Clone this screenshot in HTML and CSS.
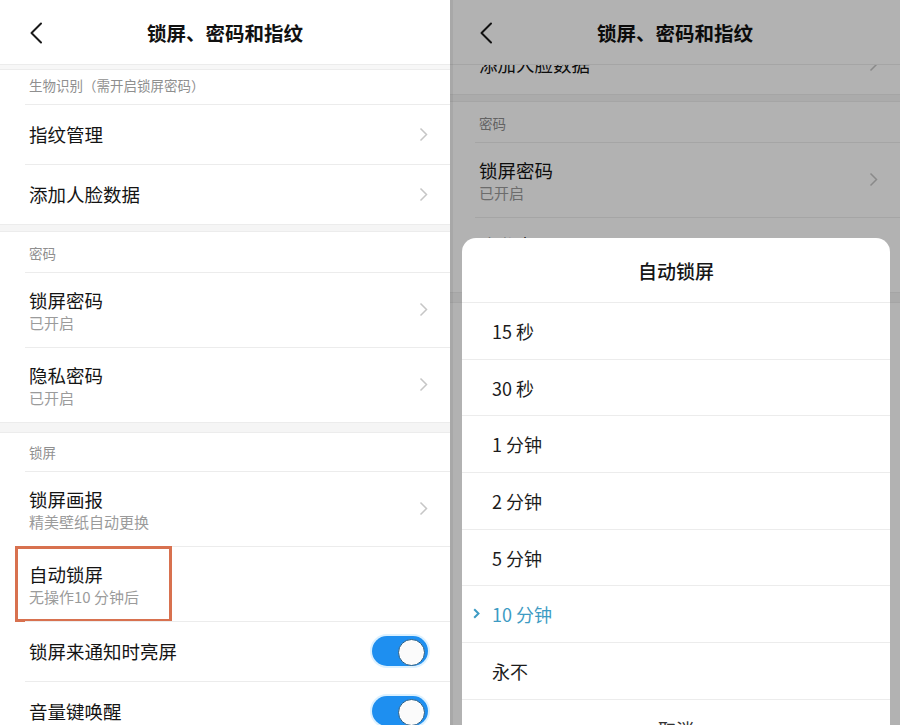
FILE: index.html
```html
<!DOCTYPE html>
<html lang="zh-CN">
<head>
<meta charset="utf-8">
<title>锁屏、密码和指纹</title>
<link rel="stylesheet" href="styles.css">
</head>
<body>
<div class="screen">
  <section class="phone">
    <header class="topbar">
      <svg class="back" width="14" height="22" viewBox="0 0 14 22"><polyline points="12,1.5 2.5,11 12,20.5" fill="none" stroke="#1a1a1a" stroke-width="2" stroke-linecap="round" stroke-linejoin="round"/></svg>
      <h1 class="title">锁屏、密码和指纹</h1>
      <span></span>
    </header>
    <div class="viewport">
      <div class="list">
        <div class="band band--xs"></div>
        <div class="sec sec--sm">生物识别（需开启锁屏密码）</div>
        <div class="row"><div class="text"><div class="name">指纹管理</div></div><svg class="chev" width="9" height="15" viewBox="0 0 9 15"><polyline points="1.5,1.5 7.5,7.5 1.5,13.5" fill="none" stroke="#c6c6c6" stroke-width="1.5"/></svg></div>
        <div class="row"><div class="text"><div class="name">添加人脸数据</div></div><svg class="chev" width="9" height="15" viewBox="0 0 9 15"><polyline points="1.5,1.5 7.5,7.5 1.5,13.5" fill="none" stroke="#c6c6c6" stroke-width="1.5"/></svg></div>
        <div class="band"></div>
        <div class="sec">密码</div>
        <div class="row row--tall"><div class="text"><div class="name">锁屏密码</div><div class="sub">已开启</div></div><svg class="chev" width="9" height="15" viewBox="0 0 9 15"><polyline points="1.5,1.5 7.5,7.5 1.5,13.5" fill="none" stroke="#c6c6c6" stroke-width="1.5"/></svg></div>
        <div class="row row--tall"><div class="text"><div class="name">隐私密码</div><div class="sub">已开启</div></div><svg class="chev" width="9" height="15" viewBox="0 0 9 15"><polyline points="1.5,1.5 7.5,7.5 1.5,13.5" fill="none" stroke="#c6c6c6" stroke-width="1.5"/></svg></div>
        <div class="band band--lg"></div>
        <div class="sec sec--md">锁屏</div>
        <div class="row row--tall"><div class="text"><div class="name">锁屏画报</div><div class="sub">精美壁纸自动更换</div></div><svg class="chev" width="9" height="15" viewBox="0 0 9 15"><polyline points="1.5,1.5 7.5,7.5 1.5,13.5" fill="none" stroke="#c6c6c6" stroke-width="1.5"/></svg></div>
        <div class="row row--tall"><div class="text"><div class="name">自动锁屏</div><div class="sub">无操作10 分钟后</div></div><div class="mark"></div></div>
        <div class="row"><div class="text"><div class="name">锁屏来通知时亮屏</div></div><span class="switch"></span></div>
        <div class="row"><div class="text"><div class="name">音量键唤醒</div></div><span class="switch"></span></div>
      </div>
    </div>
  </section>

  <section class="phone phone--dim">
    <header class="topbar">
      <svg class="back" width="14" height="22" viewBox="0 0 14 22"><polyline points="12,1.5 2.5,11 12,20.5" fill="none" stroke="#1a1a1a" stroke-width="2" stroke-linecap="round" stroke-linejoin="round"/></svg>
      <h1 class="title">锁屏、密码和指纹</h1>
      <span></span>
    </header>
    <div class="viewport">
      <div class="list list--scrolled">
        <div class="row"><div class="text"><div class="name">添加人脸数据</div></div><svg class="chev" width="9" height="15" viewBox="0 0 9 15"><polyline points="1.5,1.5 7.5,7.5 1.5,13.5" fill="none" stroke="#c6c6c6" stroke-width="1.5"/></svg></div>
        <div class="band"></div>
        <div class="sec">密码</div>
        <div class="row row--tall"><div class="text"><div class="name">锁屏密码</div><div class="sub">已开启</div></div><svg class="chev" width="9" height="15" viewBox="0 0 9 15"><polyline points="1.5,1.5 7.5,7.5 1.5,13.5" fill="none" stroke="#c6c6c6" stroke-width="1.5"/></svg></div>
        <div class="row row--tall"><div class="text"><div class="name">隐私密码</div><div class="sub">已开启</div></div><svg class="chev" width="9" height="15" viewBox="0 0 9 15"><polyline points="1.5,1.5 7.5,7.5 1.5,13.5" fill="none" stroke="#c6c6c6" stroke-width="1.5"/></svg></div>
        <div class="band band--lg"></div>
      </div>
    </div>
    <div class="scrim"></div>
    <div class="sheet">
      <div class="sheet-title">自动锁屏</div>
      <div class="opt">15 秒</div>
      <div class="opt">30 秒</div>
      <div class="opt">1 分钟</div>
      <div class="opt">2 分钟</div>
      <div class="opt">5 分钟</div>
      <div class="opt opt--on"><svg class="tick" width="7" height="11" viewBox="0 0 7 11"><polyline points="1.2,1.2 5.5,5.5 1.2,9.8" fill="none" stroke="#3d9bc3" stroke-width="2"/></svg>10 分钟</div>
      <div class="opt">永不</div>
      <div class="cancel">取消</div>
    </div>
  </section>
</div>
</body>
</html>
```

FILE: styles.css
```css
* { box-sizing: border-box; }

html, body {
  margin: 0;
  padding: 0;
  background: #ffffff;
}

body {
  width: 900px;
  height: 725px;
  overflow: hidden;
  font-family: "Noto Sans CJK SC", "Noto Sans", sans-serif;
  color: #1a1a1a;
}

.screen {
  display: flex;
  width: 900px;
  height: 725px;
}

.phone {
  position: relative;
  width: 450px;
  height: 725px;
  background: #ffffff;
  display: flex;
  flex-direction: column;
  overflow: hidden;
}

.topbar {
  height: 65px;
  flex: none;
  display: grid;
  grid-template-columns: 1fr auto 1fr;
  align-items: center;
  padding: 0 29px;
  border-bottom: 1px solid #ececec;
  background: #ffffff;
  position: relative;
  z-index: 1;
}

.back { display: block; margin-top: 1px; }

.title {
  margin: 0;
  font-size: 19.5px;
  font-weight: 600;
  line-height: 26px;
  color: #111;
  letter-spacing: 0;
  padding-top: 2px;
}

.viewport {
  flex: 1;
  overflow: hidden;
}

.list--scrolled { margin-top: -31px; }

.band {
  height: 8px;
  background: #f5f5f5;
  border-top: 1px solid #ececec;
  border-bottom: 1px solid #ececec;
}
.band--xs { height: 5px; background: #f7f7f7; border-top: none; }
.band--lg { height: 11px; }

.sec {
  height: 40px;
  display: flex;
  align-items: center;
  padding-left: 29px;
  font-size: 13.5px;
  color: #8f8f8f;
  padding-top: 2px;
}
.sec--sm { height: 34px; padding-top: 0; padding-bottom: 4px; }
.sec--md { height: 38px; padding-top: 0; padding-bottom: 1px; }

.row {
  position: relative;
  height: 60px;
  display: flex;
  align-items: center;
  justify-content: space-between;
  padding: 0 22px 0 29px;
}
.row::before {
  content: "";
  position: absolute;
  left: 25px;
  right: 0;
  top: 0;
  height: 1px;
  background: #ececec;
}
.row--tall { height: 75px; }

.name {
  font-size: 18.5px;
  line-height: 24px;
  color: #141414;
}
.sub {
  font-size: 15px;
  line-height: 21px;
  color: #9b9b9b;
}
.row--tall .text { margin-top: 2px; }

.chev { display: block; flex: none; }

.mark {
  position: absolute;
  left: 15px;
  top: 0;
  width: 157px;
  height: 76px;
  border: 3.5px solid #d8714f;
}

.switch {
  position: relative;
  flex: none;
  width: 56px;
  height: 30px;
  border-radius: 15px;
  background: #1e8ff0;
  box-shadow: 0 0 0 2px #dcf1ff;
  margin-right: 0.5px;
}
.switch::after {
  content: "";
  position: absolute;
  right: 2.5px;
  top: 2.5px;
  width: 25px;
  height: 25px;
  border-radius: 50%;
  background: #fbfbfb;
  border: 1.5px solid #2b5e84;
}

/* dimmed side */
.scrim {
  position: absolute;
  inset: 0;
  background: rgba(0, 0, 0, 0.3);
  box-shadow: inset 3px 0 0 rgba(0, 0, 0, 0.05);
  z-index: 2;
}

.sheet {
  position: absolute;
  left: 12px;
  right: 10px;
  top: 238px;
  height: 540px;
  background: #ffffff;
  border-radius: 14px;
  z-index: 3;
  display: flex;
  flex-direction: column;
}

.sheet-title {
  height: 65px;
  flex: none;
  display: flex;
  align-items: center;
  justify-content: center;
  font-size: 19px;
  font-weight: 500;
  color: #161616;
  border-bottom: 1px solid #ececec;
}

.opt {
  height: 56.7px;
  flex: none;
  display: flex;
  align-items: center;
  padding-left: 30px;
  font-size: 18px;
  color: #1c1c1c;
  border-bottom: 1px solid #ececec;
  position: relative;
}

.opt--on { color: #3d9bc3; }

.tick {
  position: absolute;
  left: 11px;
  top: 50%;
  margin-top: -6px;
}

.cancel {
  height: 57px;
  flex: none;
  display: flex;
  align-items: center;
  justify-content: center;
  font-size: 18px;
  color: #333;
  padding-top: 2px;
}
```
